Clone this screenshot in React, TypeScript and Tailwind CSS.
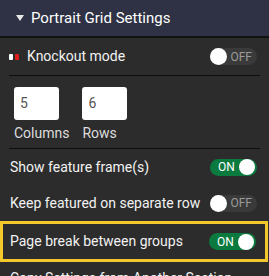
import React from 'react';

const Toggle: React.FC<{ on: boolean }> = ({ on }) => {
    if (on) {
        return (
            <div className="flex items-center justify-between w-[47px] h-[17px] rounded-full bg-[#0b7a3f] pl-[8px] pr-[2px]">
                <span className="text-[12px] leading-none text-white">ON</span>
                <span className="w-[16px] h-[16px] rounded-full bg-white" />
            </div>
        );
    }
    return (
        <div className="flex items-center justify-between w-[47px] h-[17px] rounded-full bg-[#3a3a3a] pr-[5px]">
            <span className="w-[17px] h-[17px] rounded-full bg-white" />
            <span className="text-[12px] leading-none text-[#9a9a9a]">OFF</span>
        </div>
    );
};

const SettingRow: React.FC<{ label: string; on: boolean }> = ({ label, on }) => (
    <div className="flex items-center justify-between h-[36px] pl-[10px] pr-[12px]">
        <span className="text-[14px] text-[#f2f2f2]">{label}</span>
        <Toggle on={on} />
    </div>
);

const App: React.FC = () => {
    return (
        <div
            className="w-[269px] h-[276px] overflow-hidden bg-[#2c2c2c] flex flex-col"
            style={{ fontFamily: 'Roboto, "Liberation Sans", sans-serif' }}
        >
            {/* Header */}
            <div className="flex items-center h-[38px] shrink-0 bg-[#2e3244] border-b-2 border-[#121212] pl-[16px] gap-[7px]">
                <svg width="8" height="6" viewBox="0 0 8 6">
                    <path d="M0 0 L8 0 L4 6 Z" fill="#e8e8e8" />
                </svg>
                <span className="text-[15px] text-white">Portrait Grid Settings</span>
            </div>

            {/* Knockout */}
            <div className="flex items-center justify-between h-[37px] shrink-0 pl-[9px] pr-[12px] mx-0">
                <div className="flex items-center gap-[8px]">
                    <div className="flex items-center gap-[2px]">
                        <span className="w-[4px] h-[6px] rounded-[1px] bg-white" />
                        <span className="w-[4px] h-[6px] rounded-[1px] bg-[#e01b1b]" />
                    </div>
                    <span className="text-[14px] text-[#f2f2f2]">Knockout mode</span>
                </div>
                <Toggle on={false} />
            </div>
            <div className="mx-[9px] h-px shrink-0 bg-[#0e0e0e]" />

            {/* Grid inputs */}
            <div className="flex gap-[13px] pl-[14px] pt-[11px] h-[72px] shrink-0">
                <div className="flex flex-col">
                    <div className="w-[45px] h-[33px] rounded-[3px] bg-white flex items-center pl-[6px] text-[14px] text-[#555]">5</div>
                    <span className="text-[14px] text-[#dcdcdc] mt-[3px]">Columns</span>
                </div>
                <div className="flex flex-col">
                    <div className="w-[45px] h-[33px] rounded-[3px] bg-white flex items-center pl-[6px] text-[14px] text-[#555]">6</div>
                    <span className="text-[14px] text-[#dcdcdc] mt-[3px]">Rows</span>
                </div>
            </div>
            <div className="mx-[9px] h-px shrink-0 bg-[#0e0e0e]" />

            <div className="pt-[0px] shrink-0">
                <SettingRow label="Show feature frame(s)" on={true} />
                <SettingRow label="Keep featured on separate row" on={false} />
            </div>

            {/* Highlighted row */}
            <div className="mt-[0px] h-[41px] shrink-0 border-[3px] border-[#f2c82c] flex items-center justify-between pl-[7px] pr-[9px] mr-[1px]">
                <span className="text-[14px] text-[#f2f2f2]">Page break between groups</span>
                <Toggle on={true} />
            </div>

            <div className="pl-[10px] pt-[6px] text-[14px] text-[#f2f2f2] whitespace-nowrap">
                Copy Settings from Another Section
            </div>
        </div>
    );
};

export default App;
